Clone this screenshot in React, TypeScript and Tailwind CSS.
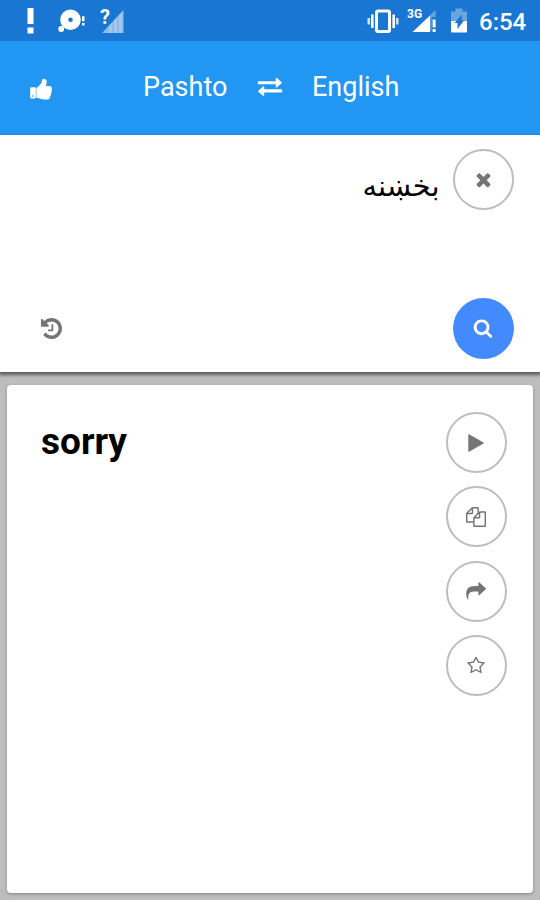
import React from 'react';

type IconProps = { className?: string };

const ThumbIcon = ({ className }: IconProps) => (
  <svg className={className} viewBox="0 0 22 22" fill="currentColor">
    <path fillRule="evenodd" d="M1 9.200h4q.8 0 .8.8v9.600q0 .8-.8.8H1q-.8 0-.8-.8V10q0-.8.8-.8zm1.900 8a.8.8 0 1 0 0 1.600.8.8 0 0 0 0-1.600z" />
    <path d="M6.300 10.100q3-2 4.700-4.500.7-1.100.9-3Q12.100.700 13.900.700q2.800.200 2.800 3.200 0 1.800-1 4.200h4q2.300.400 2.300 2.600 0 1.100-.6 1.700.7 1.800-.5 3.200.3 1.800-.8 2.800 0 3.100-3.400 3.100h-2.500q-2.300-.1-4.600-1-1.600-.7-3.300-.7z" />
  </svg>
);

const ExchangeIcon = ({ className }: IconProps) => (
  <svg className={className} viewBox="0 0 26 20" fill="currentColor">
    <path d="M1.500 4.200h17.300V1q.3-.6.900-.2l5 4.400q.6.500 0 1l-5 4.400q-.6.300-.9-.3V7.300H1.500q-.7 0-.7-.7V4.900q0-.7.7-.7z" />
    <path d="M24.500 12.300H7.200V9.500q-.3-.6-.9-.2l-5 4.400q-.6.500 0 1l5 4.400q.6.300.9-.3v-3.300h17.300q.7 0 .7-.7v-1.800q0-.7-.7-.7z" />
  </svg>
);

const CloseIcon = ({ className }: IconProps) => (
  <svg className={className} viewBox="0 0 1792 1792" fill="currentColor">
    <path d="M1490 1322q0 40-28 68l-136 136q-28 28-68 28t-68-28l-294-294-294 294q-28 28-68 28t-68-28l-136-136q-28-28-28-68t28-68l294-294-294-294q-28-28-28-68t28-68l136-136q28-28 68-28t68 28l294 294 294-294q28-28 68-28t68 28l136 136q28 28 28 68t-28 68l-294 294 294 294q28 28 28 68z" />
  </svg>
);

const SearchIcon = ({ className }: IconProps) => (
  <svg className={className} viewBox="0 0 1792 1792" fill="currentColor">
    <path d="M1216 832q0-185-131.5-316.500t-316.500-131.500-316.500 131.500-131.500 316.500 131.500 316.500 316.500 131.500 316.500-131.500 131.500-316.500zm512 832q0 52-38 90t-90 38q-54 0-90-38l-343-342q-179 124-399 124-143 0-273.500-55.500t-225-150-150-225-55.500-273.500 55.500-273.500 150-225 225-150 273.500-55.500 273.500 55.500 225 150 150 225 55.500 273.500q0 220-124 399l343 343q37 37 37 90z" />
  </svg>
);

const HistoryIcon = ({ className }: IconProps) => (
  <svg className={className} viewBox="128 128 1536 1536" fill="currentColor">
    <path d="M1664 896q0 156-61 298t-164 245-245 164-298 61q-172 0-327-72.500t-264-204.500q-7-10-6.500-22.500t8.500-20.500l137-138q10-9 25-9 16 2 23 12 73 95 179 147t225 52q104 0 198.500-40.500t163.500-109.500 109.500-163.500 40.500-198.500-40.500-198.500-109.500-163.500-163.500-109.500-198.500-40.500q-98 0-188 35.500t-160 101.500l137 138q31 30 14 69-17 40-59 40h-448q-26 0-45-19t-19-45v-448q0-42 40-59 39-17 69 14l130 129q107-101 244.500-156.500t284.500-55.500q156 0 298 61t245 164 164 245 61 298zm-640-288v448q0 14-9 23t-23 9h-320q-14 0-23-9t-9-23v-64q0-14 9-23t23-9h224v-352q0-14 9-23t23-9h64q14 0 23 9t9 23z" />
  </svg>
);

const PlayIcon = ({ className }: IconProps) => (
  <svg className={className} viewBox="0 0 16 18" fill="currentColor">
    <path d="M.3.600Q.300-.200 1 .200L15.500 8.400q.800.600 0 1.200L1 17.800q-.700.400-.700-.400z" />
  </svg>
);

const CopyIcon = ({ className }: IconProps) => (
  <svg className={className} viewBox="0 0 1792 1792" fill="currentColor">
    <path d="M1696 384q40 0 68 28t28 68v1216q0 40-28 68t-68 28h-960q-40 0-68-28t-28-68v-288h-544q-40 0-68-28t-28-68v-672q0-40 20-88t48-76l408-408q28-28 76-48t88-20h416q40 0 68 28t28 68v328q68-40 128-40h416zm-544 213l-299 299h299v-299zm-640-384l-299 299h299v-299zm196 647l316-316v-416h-384v416q0 40-28 68t-68 28h-416v640h512v-256q0-40 20-88t48-76zm956 804v-1152h-384v416q0 40-28 68t-68 28h-416v640h896z" />
  </svg>
);

const ShareIcon = ({ className }: IconProps) => (
  <svg className={className} viewBox="0 0 20 18" fill="currentColor">
    <path d="M12.400.500q.200-.600.800-.200l6.500 6q.500.500 0 1l-6.500 6q-.600.400-.8-.2V9.400H8.500Q3 9.300 2.400 13.500q-.2 2-.1 3.700-.3.700-.7 0Q.200 14.800.200 11.200.400 4.200 8.500 4.100h3.900z" />
  </svg>
);

const StarIcon = ({ className }: IconProps) => (
  <svg className={className} viewBox="64 100 1664 1590" fill="currentColor">
    <path d="M1201 1004l306-297-422-62-189-382-189 382-422 62 306 297-73 421 378-199 377 199zm527-357q0 22-26 48l-363 354 86 500q1 7 1 20 0 50-41 50-19 0-40-12l-449-236-449 236q-22 12-40 12-21 0-31.500-14.500t-10.500-35.500q0-6 2-20l86-500-364-354q-25-27-25-48 0-37 56-46l502-73 225-455q19-41 49-41t49 41l225 455 502 73q56 9 56 46z" />
  </svg>
);

const AlertIcon = () => (
  <svg className="h-[26px] w-[7px]" viewBox="0 0 7 26" fill="currentColor">
    <rect x=".5" width="6" height="16" />
    <rect x=".5" y="19.500" width="6" height="6" />
  </svg>
);

const DiscIcon = () => (
  <svg className="ml-[24px] h-[26px] w-[27px]" viewBox="0 0 27 26" fill="currentColor">
    <path fillRule="evenodd" d="M12.500 1.500a10.300 10.300 0 1 1 0 20.600 10.300 10.300 0 0 1 0-20.600zm0 8a2.300 2.300 0 1 0 0 4.600 2.300 2.300 0 0 0 0-4.600z" />
    <circle cx="3.200" cy="21" r="2.900" />
    <path d="M24 8.200h2.500v5H24zM24 15h2.500v2.500H24z" />
  </svg>
);

const NoSignalIcon = () => (
  <div className="relative ml-[16px] h-[26px] w-[23px]">
    <svg className="h-[26px] w-[23px]" viewBox="0 0 23 26" fill="currentColor">
      <path opacity=".5" d="M22.500 2v23H1z" />
      <path opacity=".2" d="M8 17.500l3-3V25H8zM13 12l3-3v16h-3zM18 7l3-3v21h-3z" />
    </svg>
    <span className="absolute -left-px -top-[3px] text-[20px] font-bold leading-[24px]">?</span>
  </div>
);

const VibrateIcon = () => (
  <svg className="h-[26px] w-[32px]" viewBox="0 0 32 26" fill="currentColor">
    <rect x="9.500" y="3" width="13" height="20.500" rx="1.500" fill="none" stroke="currentColor" strokeWidth="3" />
    <path d="M4 6.500h2.600v13.500H4zM25.400 6.500H28v13.500h-2.600z" />
    <path opacity=".8" d="M.5 10H3v6.500H.5zM29 10h2.500v6.500H29z" />
  </svg>
);

const MobileSignalIcon = () => (
  <div className="relative ml-[7px] h-[26px] w-[31px]">
    <svg className="h-[26px] w-[31px]" viewBox="0 0 31 26" fill="currentColor">
      <path opacity=".35" d="M29.500 2v7h-4v14H24V7.500z" />
      <path d="M24 7.500V24H6.500z" />
      <path d="M26.600 11.500h3v8h-3zM26.600 21h3v3h-3z" />
    </svg>
    <span className="absolute left-px top-0 text-[12px] font-bold leading-[13px]">3G</span>
  </div>
);

const BatteryIcon = () => (
  <svg className="ml-[13px] h-[26px] w-[18px]" viewBox="0 0 18 26" fill="currentColor">
    <path opacity=".35" d="M5.500.500h7v3H17V13H1V3.500h4.500z" />
    <path d="M1 13h16v10.500q0 1-1 1H2q-1 0-1-1z" />
    <path fill="#1976d2" d="M11.800 6.500v6H14L7.500 21v-6H4.500z" />
  </svg>
);

function RoundButton({ children, label }: { children: React.ReactNode; label: string }) {
  return (
    <button
      aria-label={label}
      className="flex size-[61px] shrink-0 items-center justify-center rounded-full border-2 border-[#bdbdbd] bg-white text-[#757575]"
    >
      {children}
    </button>
  );
}

function StatusBar() {
  return (
    <div className="flex h-[41px] items-start bg-[#1976d2] pl-[27px] pr-[14px] pt-[8px] text-white">
      <AlertIcon />
      <DiscIcon />
      <NoSignalIcon />
      <div className="ml-auto flex">
        <VibrateIcon />
        <MobileSignalIcon />
        <BatteryIcon />
        <span className="ml-[11px] w-[47px] whitespace-nowrap text-[24px] font-medium leading-[28px]">6:54</span>
      </div>
    </div>
  );
}

function Header() {
  return (
    <header className="flex h-[94px] items-start bg-[#2196f3] pt-[29px] text-white">
      <ThumbIcon className="ml-[30px] mt-[8px] size-[22px]" />
      <span className="ml-[91px] w-[85px] whitespace-nowrap text-[27px] leading-[34px]">Pashto</span>
      <ExchangeIcon className="ml-[29px] mt-[7px] h-[20px] w-[26px]" />
      <span className="ml-[29px] whitespace-nowrap text-[27px] leading-[34px]">English</span>
    </header>
  );
}

export default function App() {
  return (
    <div className="flex h-[900px] w-[540px] flex-col overflow-hidden bg-[#bdbdbd] font-[Roboto,sans-serif]">
      <StatusBar />
      <Header />

      <section className="flex h-[237px] shrink-0 flex-col justify-between bg-white pb-[13.5px] pl-[40.5px] pr-[26.5px] pt-[14px] shadow-[0_2px_3px_1px_rgba(0,0,0,0.5)]">
        <div className="flex justify-end">
          <p dir="rtl" lang="ps" className="mr-[13px] mt-[16px] text-[29px] leading-[42px] text-black font-['DejaVu_Sans',sans-serif]">
            بخښنه
          </p>
          <RoundButton label="Clear"><CloseIcon className="size-[21px]" /></RoundButton>
        </div>
        <div className="flex items-center justify-between">
          <HistoryIcon className="size-[21px] text-[#757575]" />
          <button aria-label="Search" className="flex size-[61px] items-center justify-center rounded-full bg-[#448aff] text-white">
            <SearchIcon className="size-[20px]" />
          </button>
        </div>
      </section>

      <main className="mx-[7px] mb-[7px] mt-[13px] flex flex-1 items-start justify-between rounded-[4px] bg-white pl-[34px] pr-[26.5px] pt-[27px] shadow-[0_1px_3px_rgba(0,0,0,0.3)]">
        <h1 className="mt-[9px] text-[37px] font-bold leading-[42px] text-black">sorry</h1>
        <div className="flex flex-col gap-[13.3px]">
          <RoundButton label="Play"><PlayIcon className="h-[18px] w-[16px]" /></RoundButton>
          <RoundButton label="Copy"><CopyIcon className="size-[20px]" /></RoundButton>
          <RoundButton label="Share"><ShareIcon className="h-[18px] w-[20px]" /></RoundButton>
          <RoundButton label="Favorite"><StarIcon className="h-[17px] w-[18px]" /></RoundButton>
        </div>
      </main>
    </div>
  );
}
